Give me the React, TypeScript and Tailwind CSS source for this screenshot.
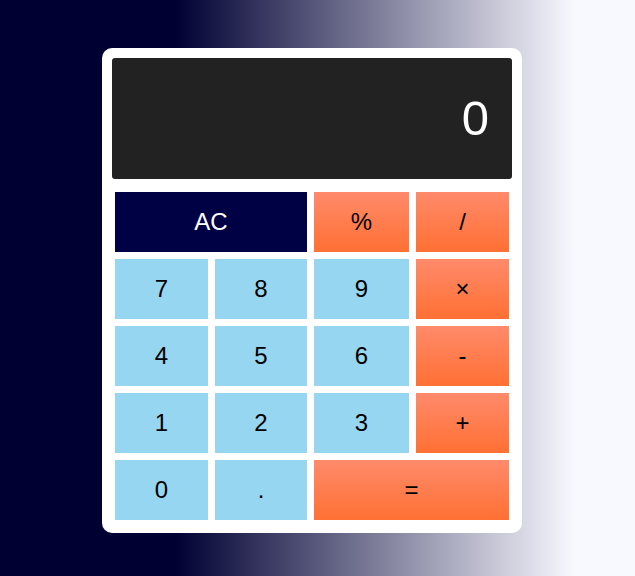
const KEYS: { label: string; kind: "ac" | "op" | "num"; span?: boolean }[] = [
  { label: "AC", kind: "ac", span: true },
  { label: "%", kind: "op" },
  { label: "/", kind: "op" },
  { label: "7", kind: "num" },
  { label: "8", kind: "num" },
  { label: "9", kind: "num" },
  { label: "×", kind: "op" },
  { label: "4", kind: "num" },
  { label: "5", kind: "num" },
  { label: "6", kind: "num" },
  { label: "-", kind: "op" },
  { label: "1", kind: "num" },
  { label: "2", kind: "num" },
  { label: "3", kind: "num" },
  { label: "+", kind: "op" },
  { label: "0", kind: "num" },
  { label: ".", kind: "num" },
  { label: "=", kind: "op", span: true },
];

const KIND_CLASS = {
  ac: "bg-[#000044] text-white",
  op: "bg-[linear-gradient(to_bottom,#ff8a6b,#ff7033)] text-black",
  num: "bg-[#96d6f0] text-black",
};

export default function App() {
  return (
    <div className="min-h-[576px] w-full bg-[linear-gradient(to_right,#000033_27.5%,#f8f8ff_90.5%)] pl-[102px] pt-[48px] font-['Liberation_Sans',Arial,sans-serif]">
      <div className="w-[420px] rounded-[10px] bg-white p-[10px]">
        <div className="flex h-[121px] items-center justify-end rounded-[3px] bg-[#222222] pr-[23px] text-[49px] text-white">
          0
        </div>
        <div className="mt-[13px] mx-[3px] mb-[3px] grid grid-cols-[93px_92px_95px_93px] gap-[7px]">
          {KEYS.map((k) => (
            <button
              key={k.label}
              className={`flex h-[60px] items-center justify-center text-[24px] ${KIND_CLASS[k.kind]} ${
                k.span ? "col-span-2" : ""
              }`}
            >
              {k.label}
            </button>
          ))}
        </div>
      </div>
    </div>
  );
}
